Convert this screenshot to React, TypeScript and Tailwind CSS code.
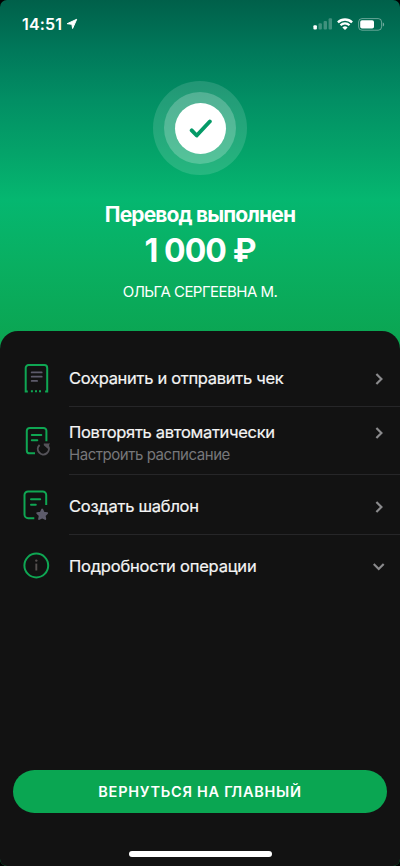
import React, { useState } from 'react';

interface ActionRowProps {
    icon: React.ReactNode;
    title: string;
    titleClass: string;
    subtitle?: string;
    rowClass: string;
    iconClass: string;
    bodyClass: string;
    trailing: React.ReactNode;
    onClick?: () => void;
}

const SignalIcon = () => (
    <svg width="20" height="12" viewBox="0 0 20 12" fill="#fff">
        <rect x="0.4" y="7.2" width="3.5" height="4.3" rx="1" />
        <rect x="5.5" y="5.3" width="3.4" height="6.2" rx="1" opacity="0.25" />
        <rect x="10.6" y="2.9" width="3.4" height="8.6" rx="1" opacity="0.25" />
        <rect x="15.6" y="0.3" width="3.4" height="11.2" rx="1" opacity="0.25" />
    </svg>
);

const WifiIcon = () => (
    <svg width="16" height="12" viewBox="0 0 16 12" fill="none" stroke="#fff" strokeWidth="2.3">
        <path d="M0.9 4.4a10.1 10.1 0 0 1 14.2 0" />
        <path d="M3.5 7.3a6.4 6.4 0 0 1 9 0" />
        <path d="M8 12 5.4 9.5a3.7 3.7 0 0 1 5.200 0Z" fill="#fff" stroke="none" />
    </svg>
);

const BatteryIcon = () => (
    <svg width="27" height="13" viewBox="0 0 27 13" fill="none">
        <rect x="0.6" y="0.6" width="23" height="11.6" rx="3.4" stroke="#fff" strokeOpacity="0.4" />
        <rect x="2.2" y="2.2" width="13.8" height="8.4" rx="1.8" fill="#fff" />
        <path d="M24.8 4.4v4c.8-.3 1.3-1.1 1.3-2s-.5-1.7-1.3-2Z" fill="#fff" fillOpacity="0.45" />
    </svg>
);

const StatusBar = () => (
    <div className="flex h-12 items-center justify-between pl-[22px] pr-[15px]">
        <div className="flex items-center gap-1 text-white">
            <span className="text-[16px] font-semibold leading-5 tracking-[0.15px]">14:51</span>
            <svg width="12" height="12" viewBox="0 0 12 12" fill="#fff" stroke="#fff" strokeLinejoin="round">
                <path d="M10.700 1.300 6.600 10.500 5.900 6.300 1.200 5.700Z" />
            </svg>
        </div>
        <div className="flex items-center">
            <SignalIcon />
            <span className="ml-1 mr-[5px]"><WifiIcon /></span>
            <BatteryIcon />
        </div>
    </div>
);

const ReceiptIcon = () => (
    <svg width="28" height="30" viewBox="0 0 28 30" fill="none" strokeWidth="2">
        <path d="M4.800 28.500H2.700V4.900a2.800 2.800 0 0 1 2.800-2.800h15.900a2.800 2.800 0 0 1 2.800 2.800v23.600h-2.100" stroke="#0fa653" />
        <path d="M8.700 9.400h10M8.700 13.700h10M8.700 17.900h5.400" stroke="#5d5b6b" strokeLinecap="round" strokeWidth="1.800" />
        <path d="M7.900 28.200h2M12 28.200h2M16 28.200h2" stroke="#0fa653" />
    </svg>
);

const RepeatIcon = () => (
    <svg width="28" height="30" viewBox="0 0 28 30" fill="none" strokeWidth="2">
        <path d="M12 27.300H6.700a2.900 2.900 0 0 1-2.900-2.900V4.800a2.900 2.900 0 0 1 2.900-2.900h13.800a2.900 2.900 0 0 1 2.900 2.900v10.400" stroke="#0fa653" />
        <path d="M8.800 8.900h9.500M8.800 14.200h5.500" stroke="#0fa653" strokeLinecap="round" />
        <path d="M16.600 18.900a5.500 5.500 0 1 0 8.300 1" stroke="#555359" strokeWidth="2" />
        <path d="M20.800 17.600h6.300l-1 1.200v3.800h-1.600l-3.700-3.400Z" fill="#555359" />
    </svg>
);

const TemplateIcon = () => (
    <svg width="28" height="30" viewBox="0 0 28 30" fill="none" strokeWidth="2">
        <path d="M11.300 28.200H5.100a3.600 3.600 0 0 1-3.600-3.600V5.100a3.600 3.600 0 0 1 3.600-3.600h14.500a3.600 3.600 0 0 1 3.600 3.600v9.900" stroke="#0fa653" />
        <path d="M8 9.300h9.200M8 14.700h4.800" stroke="#0fa653" strokeLinecap="round" />
        <path d="m19.200 19.500 1.500 3.100 3.500.5-2.500 2.500.6 3.400-3.100-1.600-3.100 1.600.6-3.400-2.500-2.500 3.500-.5Z" fill="#5d5b6b" stroke="#5d5b6b" strokeWidth="1.800" strokeLinejoin="round" />
    </svg>
);

const InfoIcon = () => (
    <svg width="28" height="28" viewBox="0 0 28 28" fill="none">
        <circle cx="13.300" cy="13.500" r="11.900" stroke="#0fa653" strokeWidth="2" />
        <circle cx="13.300" cy="8.600" r="1.200" fill="#55504f" />
        <path d="M13.300 11.600v6.900" stroke="#55504f" strokeWidth="1.900" />
    </svg>
);

const ChevronRight = () => (
    <svg width="8" height="12" viewBox="0 0 8 12" fill="none" stroke="#8a8a8c" strokeWidth="2.2">
        <path d="m1.400 1 5 5-5 5" />
    </svg>
);

const ChevronDown = ({ flipped }: { flipped: boolean }) => (
    <svg width="12" height="8" viewBox="0 0 12 8" fill="none" stroke="#8a8a8c" strokeWidth="2.2" className={flipped ? 'rotate-180' : ''}>
        <path d="m.7 1 5 5 5-5" />
    </svg>
);

const ActionRow: React.FC<ActionRowProps> = ({ icon, title, titleClass, subtitle, rowClass, iconClass, bodyClass, trailing, onClick }) => (
    <button type="button" onClick={onClick} className={`flex w-full pl-[23px] text-left ${rowClass}`}>
        <span className={`flex w-[46px] shrink-0 items-start ${iconClass}`}>{icon}</span>
        <span className={`flex flex-1 items-start justify-between pr-[15px] ${bodyClass}`}>
            <span className="flex flex-col">
                <span className={`whitespace-nowrap text-[16.5px] leading-6 text-[#f5f5f5] [-webkit-text-stroke:0.2px_#f5f5f5] ${titleClass}`}>{title}</span>
                {subtitle && <span className="text-[15px] leading-[21px] tracking-[-0.45px] text-[#77777a]">{subtitle}</span>}
            </span>
            <span className="flex h-[26px] w-3 items-center justify-center">{trailing}</span>
        </span>
    </button>
);

export default function App() {
    const [expanded, setExpanded] = useState(false);

    return (
        <div className="h-[866px] w-[400px] bg-black font-['Inter','Liberation_Sans',sans-serif]">
            <div className="flex h-full flex-col overflow-hidden rounded-[7px] bg-[linear-gradient(to_bottom,#00604a_0px,#00785a_50px,#028f64_100px,#04a269_150px,#05b770_200px,#09af61_265px,#0ba552_340px,#0ba552_100%)]">
                <StatusBar />

                <div className="flex h-[283px] shrink-0 flex-col items-center pt-[33px] text-white">
                    <div className="flex size-[94px] items-center justify-center rounded-full bg-white/13">
                        <div className="flex size-[72px] items-center justify-center rounded-full bg-white/22">
                            <div className="flex size-[51px] items-center justify-center rounded-full bg-white">
                                <svg width="24" height="20" viewBox="0 0 24 20" fill="none" stroke="#049a67" strokeWidth="3.9" strokeLinecap="round" strokeLinejoin="round">
                                    <path d="m3.700 12.300 5 5.200L21.800 3.500" />
                                </svg>
                            </div>
                        </div>
                    </div>
                    <h1 className="mt-[26px] text-[21px] font-bold leading-7 tracking-[-0.86px]">Перевод выполнен</h1>
                    <div className="mt-0.5 text-[32px] font-bold leading-10 tracking-[-0.9px]">1 000 ₽</div>
                    <div className="mt-[11px] text-[15px] leading-5 tracking-[-0.53px]">ОЛЬГА СЕРГЕЕВНА М.</div>
                </div>

                <div className="flex flex-1 flex-col rounded-t-[18px] bg-[#121212]">
                    <ActionRow
                        icon={<ReceiptIcon />}
                        title="Сохранить и отправить чек"
                        titleClass="tracking-[-0.3px]"
                        rowClass="h-[76px]"
                        iconClass="pt-8"
                        bodyClass="border-b border-[#262628] pt-[35px]"
                        trailing={<ChevronRight />}
                    />
                    <ActionRow
                        icon={<RepeatIcon />}
                        title="Повторять автоматически"
                        titleClass="tracking-[-0.3px]"
                        subtitle="Настроить расписание"
                        rowClass="h-[68px]"
                        iconClass="pt-[19px]"
                        bodyClass="border-b border-[#262628] pt-[13px]"
                        trailing={<ChevronRight />}
                    />
                    <ActionRow
                        icon={<TemplateIcon />}
                        title="Создать шаблон"
                        titleClass="tracking-[-0.25px]"
                        rowClass="h-[60px]"
                        iconClass="pt-[15px]"
                        bodyClass="border-b border-[#262628] pt-[19px]"
                        trailing={<ChevronRight />}
                    />
                    <ActionRow
                        icon={<InfoIcon />}
                        title="Подробности операции"
                        titleClass="tracking-[-0.22px]"
                        rowClass="h-[62px]"
                        iconClass="pt-[17px]"
                        bodyClass="pt-[19px]"
                        trailing={<ChevronDown flipped={expanded} />}
                        onClick={() => setExpanded(!expanded)}
                    />

                    <div className="mt-auto flex flex-col items-center px-[13px] pb-[9px]">
                        <button type="button" className="h-[43px] w-full rounded-full bg-[#0aa652] text-[14.5px] font-semibold tracking-[0.73px] text-white">
                            ВЕРНУТЬСЯ НА ГЛАВНЫЙ
                        </button>
                        <div className="mt-[38px] h-[6px] w-[143px] rounded-full bg-white" />
                    </div>
                </div>
            </div>
        </div>
    );
}
